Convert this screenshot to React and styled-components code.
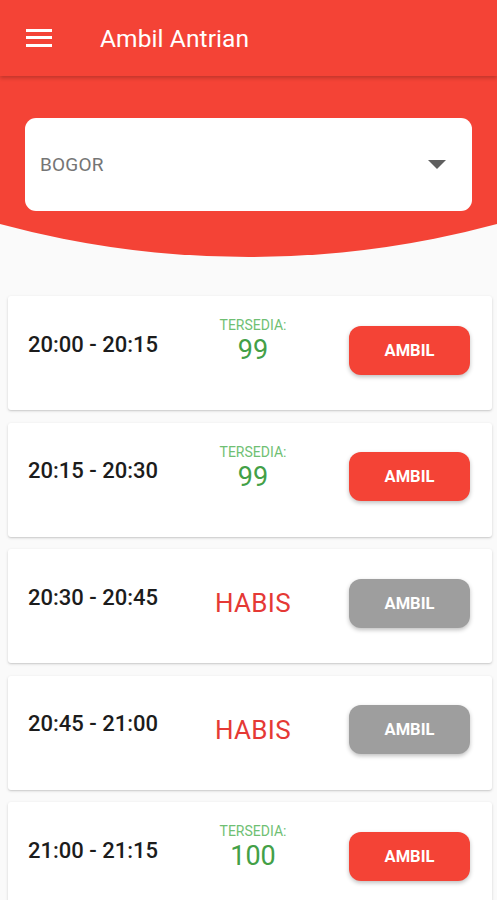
import React from "react";
import styled, { createGlobalStyle } from "styled-components";

const Global = createGlobalStyle`
  html, body { margin: 0; padding: 0; background: #fafafa; }
  body { font-family: Roboto, "Noto Sans", "Liberation Sans", sans-serif; }
  * { box-sizing: border-box; }
`;

const RED = "#f44336";

const Page = styled.div`
  width: 497px;
  height: 900px;
  overflow: hidden;
  background: #fafafa;
`;

const Header = styled.header`
  height: 257px;
  background: ${RED};
  clip-path: circle(952px at 50% -695px);
  display: flex;
  flex-direction: column;
`;

const AppBar = styled.div`
  height: 76px;
  flex: none;
  display: flex;
  align-items: center;
  background: ${RED};
  box-shadow: 0 2px 4px rgba(0, 0, 0, 0.22);
  position: relative;
  z-index: 1;
  padding-left: 26px;
`;

const Burger = styled.div`
  width: 26px;
  display: flex;
  flex-direction: column;
  gap: 4.5px;
  margin-top: -1px;
  span {
    display: block;
    height: 3px;
    background: #fff;
  }
`;

const Title = styled.h1`
  margin: 0 0 0 48px;
  font-size: 24.5px;
  font-weight: 400;
  color: #fff;
  letter-spacing: 0.1px;
`;

const Select = styled.div`
  margin: 42px 25px 0 25px;
  height: 93px;
  background: #fff;
  border-radius: 11px;
  display: flex;
  align-items: center;
  justify-content: space-between;
  padding: 0 26px 0 15px;
`;

const SelectText = styled.span`
  font-size: 19px;
  color: #757575;
  letter-spacing: 0.2px;
`;

const List = styled.div`
  padding: 39px 5px 0 8px;
  display: flex;
  flex-direction: column;
  gap: 12.5px;
`;

const Card = styled.div`
  height: 114px;
  flex: none;
  background: #fff;
  border-radius: 3px;
  box-shadow: 0 1px 3px rgba(0, 0, 0, 0.16), 0 1px 1px rgba(0, 0, 0, 0.06);
  display: flex;
  align-items: center;
  padding: 0 22px 6px 20px;
`;

const Time = styled.div`
  width: 150px;
  font-size: 22px;
  font-weight: 500;
  color: #1c1c1c;
  margin-top: -12px;
`;

const Status = styled.div`
  width: 150px;
  display: flex;
  flex-direction: column;
  align-items: center;
  margin-top: ${(p) => (p.$soldOut ? "0" : "-19px")};
`;

const Label = styled.div`
  font-size: 14px;
  color: #6fbf73;
  line-height: 16px;
`;

const Count = styled.div`
  font-size: 27px;
  color: #43a047;
  line-height: 28px;
  margin-top: 3px;
`;

const Habis = styled.div`
  font-size: 26px;
  color: #e53935;
  letter-spacing: 0.3px;
`;

const Button = styled.button`
  margin-left: auto;
  width: 121px;
  height: 49px;
  border: none;
  border-radius: 12px;
  background: ${(p) => (p.disabled ? "#9e9e9e" : RED)};
  color: #fff;
  font-family: inherit;
  font-size: 16.5px;
  font-weight: 700;
  box-shadow: 0 2px 4px rgba(0, 0, 0, 0.25);
  padding: 0;
`;

const slots = [
  { time: "20:00 - 20:15", count: 99 },
  { time: "20:15 - 20:30", count: 99 },
  { time: "20:30 - 20:45", count: 0 },
  { time: "20:45 - 21:00", count: 0 },
  { time: "21:00 - 21:15", count: 100 },
];

export default function App() {
  return (
    <Page>
      <Global />
      <Header>
        <AppBar>
          <Burger>
            <span />
            <span />
            <span />
          </Burger>
          <Title>Ambil Antrian</Title>
        </AppBar>
        <Select>
          <SelectText>BOGOR</SelectText>
          <svg width="18" height="9" viewBox="0 0 18 9">
            <path d="M0 0 L18 0 L9 9 Z" fill="#5f5f5f" />
          </svg>
        </Select>
      </Header>
      <List>
        {slots.map((s) => (
          <Card key={s.time}>
            <Time>{s.time}</Time>
            <Status $soldOut={s.count === 0}>
              {s.count > 0 ? (
                <>
                  <Label>TERSEDIA:</Label>
                  <Count>{s.count}</Count>
                </>
              ) : (
                <Habis>HABIS</Habis>
              )}
            </Status>
            <Button disabled={s.count === 0}>AMBIL</Button>
          </Card>
        ))}
      </List>
    </Page>
  );
}
